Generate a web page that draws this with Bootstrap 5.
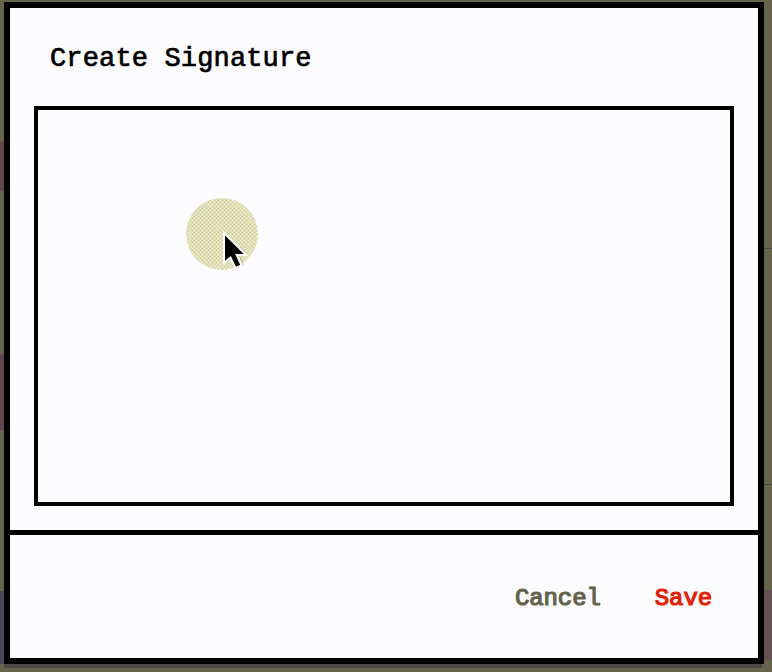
<!DOCTYPE html>
<html lang="en">
<head>
<meta charset="utf-8">
<meta name="viewport" content="width=device-width, initial-scale=1">
<title>Create Signature</title>
<link href="https://cdn.jsdelivr.net/npm/bootstrap@5.3.0/dist/css/bootstrap.min.css" rel="stylesheet">
<style>
body {
  height: 672px;
  padding: 2px 8px 8px 4px;
  font-family: "Liberation Mono", monospace;
  background:
    linear-gradient(#61484c, #61484c) 0 141px / 4px 50px no-repeat,
    linear-gradient(#61484c, #61484c) 0 354px / 4px 76px no-repeat,
    linear-gradient(#484857, #484857) 0 591px / 4px 73px no-repeat,
    linear-gradient(#35354199, #35354199) 764px 248px / 8px 1px no-repeat,
    linear-gradient(#35354199, #35354199) 764px 484px / 8px 1px no-repeat,
    linear-gradient(#655053, #655053) 764px 590px / 8px 70px no-repeat,
    linear-gradient(#4b4845, #4b4845) 4px 664px / 758px 4px no-repeat,
    conic-gradient(#6c6c48 25%, #5d5d4a 0 50%, #6c6c48 0 75%, #5d5d4a 0) 0 0 / 2px 2px;
}
.sheet { border: 6px solid #000; background: #fcfcfe; }
.sheet-top { height: 98px; padding: 35px 40px 0 40px; }
.sheet-title {
  font-size: 27px; line-height: 32px; font-weight: 400;
  letter-spacing: .15px; -webkit-text-stroke: .7px #000; color: #000;
}
.sign-pad { height: 400px; margin: 0 24px 24px; border: 4px solid #000; }
.sheet-foot { border-top: 5px solid #000; padding: 4px 46px 0 0; gap: 54px; }
.sheet-foot .btn {
  font-family: inherit; font-size: 24px; line-height: 30px; font-weight: 400;
  border: 0; border-radius: 0; letter-spacing: -.1px; -webkit-text-stroke: 1.2px currentColor;
}
.btn-cancel, .btn-cancel:hover { color: #62624d; }
.btn-save, .btn-save:hover { color: #df2109; }
.pointer { left: 186px; top: 198px; width: 72px; height: 72px; }
</style>
</head>
<body class="m-0 overflow-hidden">
<main class="sheet d-flex flex-column h-100">
  <header class="sheet-top"><h1 class="sheet-title m-0">Create Signature</h1></header>
  <section class="sign-pad" aria-label="Signature area"></section>
  <footer class="sheet-foot d-flex flex-grow-1 align-items-center justify-content-end">
    <button type="button" class="btn btn-cancel p-0">Cancel</button>
    <button type="button" class="btn btn-save p-0">Save</button>
  </footer>
</main>
<svg class="pointer position-absolute overflow-visible" viewBox="0 0 72 72" aria-hidden="true">
  <defs>
    <pattern id="dots" width="4" height="4" patternUnits="userSpaceOnUse">
      <rect width="4" height="4" fill="#dedeb6"/>
      <path d="M0 0h1v1H0zM2 2h1v1H2z" fill="#fafac0"/>
      <path d="M2 0h1v1H2zM0 2h1v1H0z" fill="#d6d6be"/>
    </pattern>
  </defs>
  <circle cx="36" cy="36" r="36" fill="url(#dots)"/>
  <path d="M37 62l2 4 6-4 5 8 8-3-3-9 6-3-6-6z" fill="#a0a090" opacity=".4"/>
  <path d="M38 35v30l6.500-5.500 5 10.500 6-2.700-4.800-10.300h9.500z" fill="#000" stroke="#fcfcfe" stroke-width="2"/>
</svg>
<script src="https://cdn.jsdelivr.net/npm/bootstrap@5.3.0/dist/js/bootstrap.bundle.min.js"></script>
</body>
</html>
